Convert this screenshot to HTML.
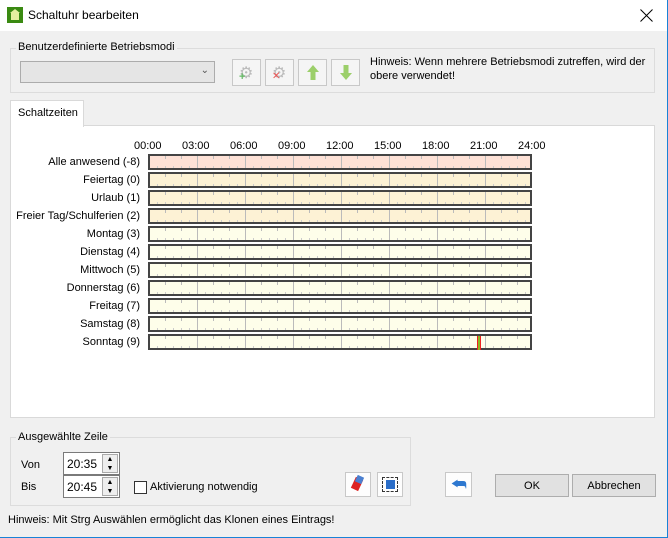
<!DOCTYPE html><html><head><style>
*{box-sizing:border-box}body{margin:0;width:668px;height:538px;background:#f0f0f0;font-family:"Liberation Sans",sans-serif;font-size:11px;color:#000;position:relative;overflow:hidden}
.a{position:absolute}
.bar{position:absolute;left:148px;width:384px;height:16px;border:2px solid #444;background-image:
linear-gradient(to right,transparent 47px,#bbb 47px,#bbb 48px),
repeating-linear-gradient(to right,transparent 0,transparent 15px,#bbb 15px,#bbb 16px),
repeating-linear-gradient(to right,transparent 0,transparent 7px,#ccc 7px,#ccc 8px);
background-size:48px 100%,16px 3px,8px 2px;background-repeat:repeat-x,repeat-x,repeat-x;background-position:0 0,0 0,0 100%}
.lbl{position:absolute;right:528px;font-size:11px;text-align:right;white-space:nowrap}
.btn{position:absolute;background:#e1e1e1;border:1px solid #adadad}
.ib{position:absolute;width:29px;height:27px;background:#f5f5f5;border:1px solid #c8c8c8}
</style></head><body>
<div class="a" style="left:0;top:0;width:668px;height:31px;background:#fff"></div>
<div class="a" style="left:7px;top:7px;width:16px;height:16px;background:#3a8a12"><div class="a" style="left:4px;top:6px;width:8px;height:7px;background:#e6f0a0"></div><div class="a" style="left:3px;top:2px;width:0;height:0;border:5px solid transparent;border-bottom:4px solid #e6f0a0;border-top:0"></div></div>
<div class="a" style="left:28px;top:8px;font-size:12px">Schaltuhr bearbeiten</div>
<svg class="a" style="left:640px;top:9px" width="13" height="13"><path d="M0.5 0.5L12.5 12.5M12.5 0.5L0.5 12.5" stroke="#000" stroke-width="1"/></svg>
<div class="a" style="right:0;top:0;width:1px;height:538px;background:#1883d7"></div>
<div class="a" style="left:0;bottom:0;width:668px;height:1px;background:#1883d7"></div>

<div class="a" style="left:10px;top:48px;width:645px;height:45px;border:1px solid #dcdcdc"></div>
<div class="a" style="left:16px;top:41px;background:#f0f0f0;padding:0 2px">Benutzerdefinierte Betriebsmodi</div>
<div class="a" style="left:20px;top:61px;width:195px;height:22px;background:#e5e5e5;border:1px solid #acacac"><span class="a" style="right:5px;top:3px;font-size:10px;color:#555">⌄</span></div>
<div class="ib" style="left:232px;top:59px"><span class="a" style="left:6px;top:3px;font-size:16px;color:#bbb">⚙</span><span class="a" style="left:6px;top:11px;color:#6b6;font-weight:bold">+</span></div>
<div class="ib" style="left:265px;top:59px"><span class="a" style="left:6px;top:3px;font-size:16px;color:#bbb">⚙</span><span class="a" style="left:6px;top:11px;color:#e55;font-size:10px">✕</span></div>
<div class="ib" style="left:298px;top:59px"><svg class="a" style="left:8px;top:5px" width="12" height="15"><path d="M6 0L12 7H8.5V15H3.5V7H0Z" fill="#9ccf6a"/></svg></div>
<div class="ib" style="left:331px;top:59px"><svg class="a" style="left:8px;top:5px" width="12" height="15"><path d="M6 15L12 8H8.5V0H3.5V8H0Z" fill="#9ccf6a"/></svg></div>
<div class="a" style="left:370px;top:55px;line-height:14px;font-size:11px">Hinweis: Wenn mehrere Betriebsmodi zutreffen, wird der<br>obere verwendet!</div>

<div class="a" style="left:10px;top:125px;width:645px;height:293px;background:#fff;border:1px solid #d9d9d9"></div>
<div class="a" style="left:10px;top:100px;width:74px;height:27px;background:#fff;border:1px solid #d9d9d9;border-bottom:none;padding:6px 0 0 7px">Schaltzeiten</div>

<div class="a" style="left:134px;top:140px;width:420px;font-size:11px">
<span class="a" style="left:0">00:00</span><span class="a" style="left:48px">03:00</span><span class="a" style="left:96px">06:00</span><span class="a" style="left:144px">09:00</span><span class="a" style="left:192px">12:00</span><span class="a" style="left:240px">15:00</span><span class="a" style="left:288px">18:00</span><span class="a" style="left:336px">21:00</span><span class="a" style="left:384px">24:00</span></div>

<div class="lbl" style="top:156px">Alle anwesend (-8)</div><div class="bar" style="top:154px;background-color:#fde1d6"></div>
<div class="lbl" style="top:174px">Feiertag (0)</div><div class="bar" style="top:172px;background-color:#fdf2d5"></div>
<div class="lbl" style="top:192px">Urlaub (1)</div><div class="bar" style="top:190px;background-color:#fdf2d5"></div>
<div class="lbl" style="top:210px">Freier Tag/Schulferien (2)</div><div class="bar" style="top:208px;background-color:#fdf2d5"></div>
<div class="lbl" style="top:228px">Montag (3)</div><div class="bar" style="top:226px;background-color:#fefeea"></div>
<div class="lbl" style="top:246px">Dienstag (4)</div><div class="bar" style="top:244px;background-color:#fefeea"></div>
<div class="lbl" style="top:264px">Mittwoch (5)</div><div class="bar" style="top:262px;background-color:#fefeea"></div>
<div class="lbl" style="top:282px">Donnerstag (6)</div><div class="bar" style="top:280px;background-color:#fefeea"></div>
<div class="lbl" style="top:300px">Freitag (7)</div><div class="bar" style="top:298px;background-color:#fefeea"></div>
<div class="lbl" style="top:318px">Samstag (8)</div><div class="bar" style="top:316px;background-color:#fefeea"></div>
<div class="lbl" style="top:336px">Sonntag (9)</div><div class="bar" style="top:334px;background-color:#fefeea"></div>
<div class="a" style="left:477px;top:336px;width:4px;height:14px;background:#8bb820;border-left:1px solid #e22;border-right:1px solid #e22"></div>

<div class="a" style="left:10px;top:437px;width:401px;height:69px;border:1px solid #dcdcdc"></div>
<div class="a" style="left:16px;top:431px;background:#f0f0f0;padding:0 2px">Ausgewählte Zeile</div>
<div class="a" style="left:21px;top:459px">Von</div><div class="a" style="left:21px;top:481px">Bis</div>
<div class="a" style="left:63px;top:452px;width:57px;height:23px;background:#fff;border:1px solid #7a7a7a;font-size:12px;padding:4px 0 0 3px">20:35<div class="a" style="left:38px;top:1px;width:16px;height:19px;background:#eee;border:1px solid #aaa;font-size:7px;line-height:9px;text-align:center">▲<br>▼</div></div>
<div class="a" style="left:63px;top:475px;width:57px;height:23px;background:#fff;border:1px solid #7a7a7a;font-size:12px;padding:4px 0 0 3px">20:45<div class="a" style="left:38px;top:1px;width:16px;height:19px;background:#eee;border:1px solid #aaa;font-size:7px;line-height:9px;text-align:center">▲<br>▼</div></div>
<div class="a" style="left:134px;top:481px;width:13px;height:13px;background:#fff;border:1px solid #333"></div>
<div class="a" style="left:150px;top:481px">Aktivierung notwendig</div>
<div class="ib" style="left:345px;top:472px;width:26px;height:25px;background:#fdfdfd"><div class="a" style="left:7px;top:5px;width:8px;height:12px;background:#d22;transform:rotate(25deg)"></div><div class="a" style="left:10px;top:3px;width:7px;height:7px;background:#4a7fd0;transform:rotate(25deg)"></div></div>
<div class="ib" style="left:377px;top:472px;width:26px;height:25px;background:#fdfdfd;"><div class="a" style="left:4px;top:4px;width:16px;height:15px;border:1px dashed #333"></div><div class="a" style="left:8px;top:7px;width:9px;height:9px;background:#2a6dc8"></div></div>
<div class="ib" style="left:445px;top:472px;width:27px;height:25px;background:#fdfdfd"><span class="a" style="left:5px;top:2px;font-size:17px;color:#2d78d0">⮪</span></div>
<div class="btn" style="left:495px;top:474px;width:74px;height:23px;text-align:center;padding-top:5px">OK</div>
<div class="btn" style="left:572px;top:474px;width:84px;height:23px;text-align:center;padding-top:5px">Abbrechen</div>
<div class="a" style="left:8px;top:514px">Hinweis: Mit Strg Auswählen ermöglicht das Klonen eines Eintrags!</div>
</body></html>
